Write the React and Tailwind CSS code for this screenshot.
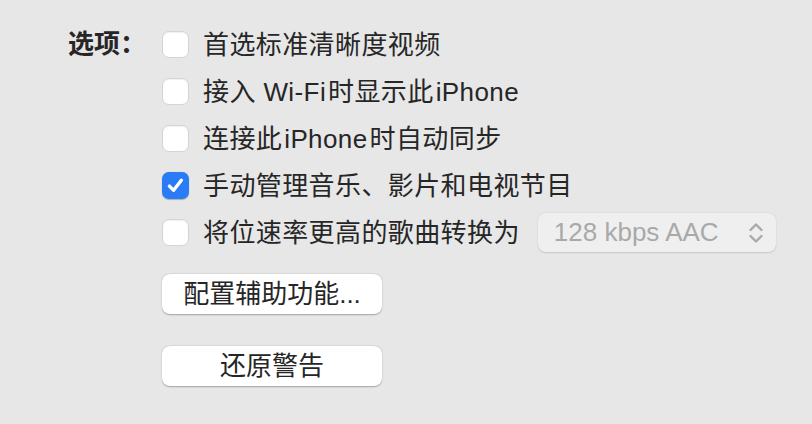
import { useState } from 'react';

const font = { fontFamily: '"Liberation Sans", "Noto Sans CJK SC", sans-serif' };

function Checkbox({ checked, onChange }) {
  return (
    <button
      type="button"
      onClick={onChange}
      className={
        'w-[27px] h-[27px] rounded-[7px] flex items-center justify-center shrink-0 ' +
        (checked
          ? 'bg-[#2a7cf6] shadow-[0_0.5px_1px_rgba(0,0,0,0.25)]'
          : 'bg-white border border-[#d4d4d4] shadow-[inset_0_1px_1px_rgba(0,0,0,0.06)]')
      }
    >
      {checked && (
        <svg width="21" height="21" viewBox="0 0 20 20" fill="none">
          <path d="M4.2 10.6 L8.2 14.6 L15.6 5" stroke="white" strokeWidth="3.2" strokeLinecap="round" strokeLinejoin="round" />
        </svg>
      )}
    </button>
  );
}

// thin gap between CJK and Latin runs, as macOS draws it
const Gap = () => <span className="inline-block w-[2px]" />;

const options = [
  <>首选标准清晰度视频</>,
  <>接入 Wi-Fi<Gap />时显示此<Gap />iPhone</>,
  <>连接此<Gap />iPhone<Gap />时自动同步</>,
  <>手动管理音乐、影片和电视节目</>,
  <>将位速率更高的歌曲转换为</>,
];

export default function App() {
  const [checked, setChecked] = useState([false, false, false, true, false]);

  const toggle = (i) => setChecked((c) => c.map((v, j) => (j === i ? !v : v)));

  return (
    <div className="w-[812px] h-[424px] bg-[#e7e7e7] text-[#262626] pl-[68px] pt-[21px] flex" style={font}>
      <div className="w-[94px] h-[47px] flex items-center text-[26px] font-bold">选项：</div>
      <div className="flex flex-col">
        {options.map((label, i) => (
          <div key={i} className="h-[47px] flex items-center">
            <Checkbox checked={checked[i]} onChange={() => toggle(i)} />
            <span className="ml-[14px] text-[26px] leading-none tracking-[0.4px] whitespace-nowrap">{label}</span>
            {i === 4 && (
              <div className="ml-[18px] w-[238px] h-[39px] rounded-[8px] bg-[#efefef] shadow-[0_0.5px_1.5px_rgba(0,0,0,0.15)] flex items-center justify-between pl-[16px] pr-[12px] text-[#a9a9a9] text-[26px]">
                <span>128 kbps AAC</span>
                <svg width="16" height="22" viewBox="0 0 16 22" fill="none">
                  <path d="M2.5 8 L8 2.5 L13.5 8" stroke="#a9a9a9" strokeWidth="2.4" strokeLinecap="round" strokeLinejoin="round" />
                  <path d="M2.5 14 L8 19.5 L13.5 14" stroke="#a9a9a9" strokeWidth="2.4" strokeLinecap="round" strokeLinejoin="round" />
                </svg>
              </div>
            )}
          </div>
        ))}
        <button
          type="button"
          className="mt-[18px] w-[220px] h-[40px] rounded-[8px] bg-white shadow-[0_0.5px_1.5px_rgba(0,0,0,0.3)] text-[26px] leading-none flex items-center justify-center"
        >
          配置辅助功能...
        </button>
        <button
          type="button"
          className="mt-[32px] w-[220px] h-[40px] rounded-[8px] bg-white shadow-[0_0.5px_1.5px_rgba(0,0,0,0.3)] text-[26px] leading-none flex items-center justify-center"
        >
          还原警告
        </button>
      </div>
    </div>
  );
}
